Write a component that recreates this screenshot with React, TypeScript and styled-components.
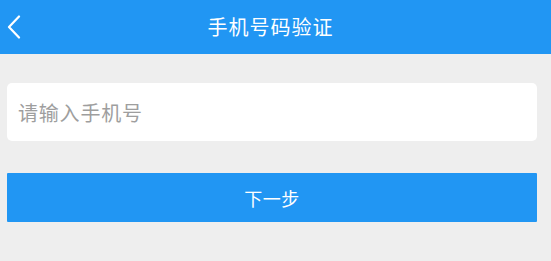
import styled, { createGlobalStyle } from "styled-components";

const GlobalStyle = createGlobalStyle`
  html, body {
    margin: 0;
    padding: 0;
    background: #eeeeee;
  }
  body {
    font-family: "Noto Sans CJK SC", "Noto Sans", sans-serif;
  }
`;

const Page = styled.div`
  width: 551px;
  height: 261px;
  background: #eeeeee;
  display: flex;
  flex-direction: column;
`;

const Header = styled.header`
  height: 54px;
  background: #2196f3;
  display: grid;
  grid-template-columns: 50px 1fr 60px;
  align-items: center;
  color: #fff;
`;

const BackButton = styled.button`
  border: none;
  background: none;
  padding: 0 0 0 7px;
  height: 100%;
  display: flex;
  align-items: center;
  cursor: pointer;
`;

const Title = styled.h1`
  margin: 0;
  text-align: center;
  font-size: 20px;
  font-weight: 400;
  line-height: 1;
  letter-spacing: 1px;
  padding-bottom: 1px;
`;

const Body = styled.main`
  padding: 29px 14px 0 7px;
  display: flex;
  flex-direction: column;
  gap: 32px;
`;

const PhoneInput = styled.input`
  height: 58px;
  box-sizing: border-box;
  border: none;
  border-radius: 5px;
  background: #fff;
  padding: 0 11px;
  font-family: inherit;
  font-size: 20px;
  letter-spacing: 0.8px;
  color: #333;
  outline: none;

  &::placeholder {
    color: #9e9e9e;
  }
`;

const NextButton = styled.button`
  height: 49px;
  border: none;
  border-radius: 1px;
  background: #2196f3;
  color: #fff;
  font-family: inherit;
  font-size: 18px;
  letter-spacing: 0.5px;
  cursor: pointer;
`;

const App = () => {
  return (
    <>
      <GlobalStyle />
      <Page>
        <Header>
          <BackButton aria-label="返回">
            <svg width="14" height="24" viewBox="0 0 14 24" fill="none">
              <path
                d="M12 1.5 L2 12 L12 22.5"
                stroke="#fff"
                strokeWidth="2.2"
                strokeLinecap="round"
                strokeLinejoin="round"
              />
            </svg>
          </BackButton>
          <Title>手机号码验证</Title>
          <span />
        </Header>
        <Body>
          <PhoneInput type="tel" placeholder="请输入手机号" />
          <NextButton>下一步</NextButton>
        </Body>
      </Page>
    </>
  );
};

export default App;
